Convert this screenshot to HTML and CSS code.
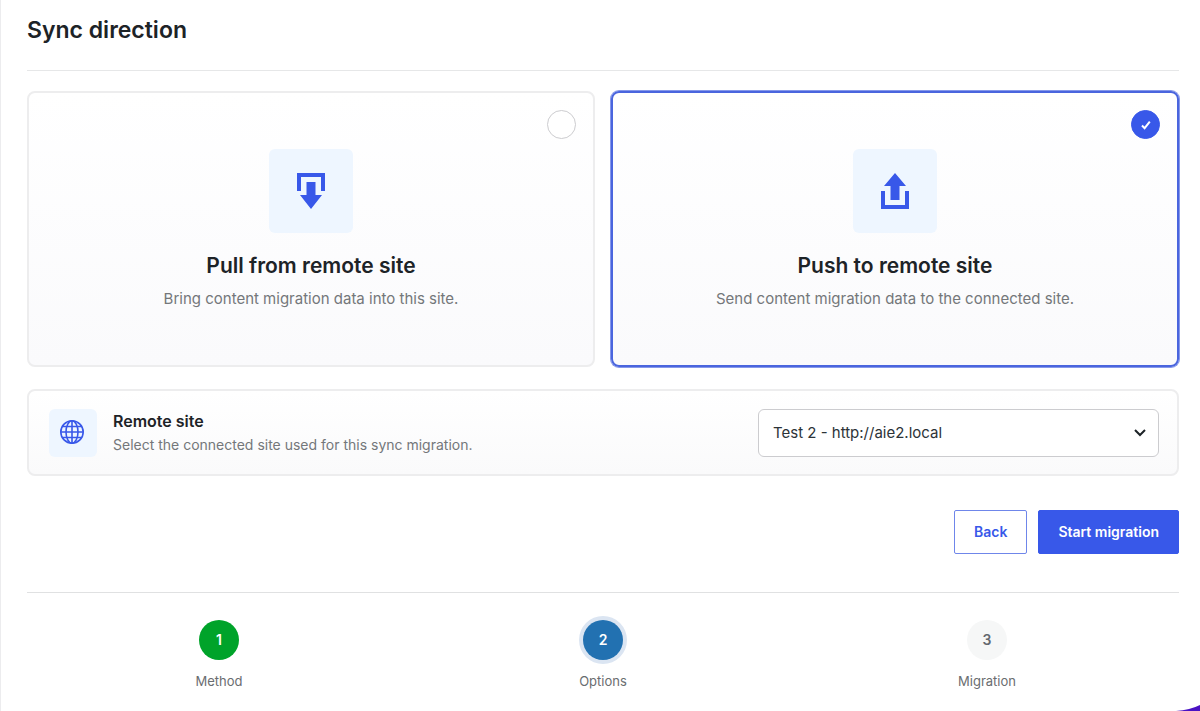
FILE: index.html
```html
<!DOCTYPE html>
<html lang="en">
<head>
<meta charset="utf-8">
<meta name="viewport" content="width=device-width, initial-scale=1">
<title>Sync direction</title>
<link rel="stylesheet" href="styles.css">
</head>
<body>
<main class="wizard">
  <header class="wizard-header">
    <h1 class="wizard-title">Sync direction</h1>
  </header>
  <form class="wizard-form">
    <div class="directions" role="radiogroup" aria-label="Sync direction">
      <label class="direction">
        <span class="direction-check">
          <input class="direction-radio" type="radio" name="direction" value="pull">
        </span>
        <span class="direction-icon">
          <svg width="28" height="36" viewBox="0 0 28 36" fill="currentColor" aria-hidden="true">
            <path d="M0 0H28V18H24V4H4V18H0Z"/>
            <path d="M9.5 9H18.5V22H25L14 36L3 22H9.5Z"/>
          </svg>
        </span>
        <span class="direction-name">Pull from remote site</span>
        <span class="direction-text">Bring content migration data into this site.</span>
      </label>
      <label class="direction direction-selected">
        <span class="direction-check">
          <input class="direction-radio" type="radio" name="direction" value="push" checked>
          <svg class="direction-tick" width="10" height="10" viewBox="0 0 10 10" fill="none" stroke="currentColor" stroke-width="2" aria-hidden="true">
            <path d="M1 5.5L3.6 8.2L8.8 1.6"/>
          </svg>
        </span>
        <span class="direction-icon">
          <svg width="28" height="36" viewBox="0 0 28 36" fill="currentColor" aria-hidden="true">
            <path d="M0 18H4V32H24V18H28V36H0Z"/>
            <path d="M14 0L25 13H18.5V27H9.5V13H3Z"/>
          </svg>
        </span>
        <span class="direction-name">Push to remote site</span>
        <span class="direction-text">Send content migration data to the connected site.</span>
      </label>
    </div>
    <section class="remote">
      <span class="remote-icon">
        <svg width="26" height="26" viewBox="0 0 26 26" fill="none" stroke="currentColor" stroke-width="1.6" aria-hidden="true">
          <circle cx="12" cy="12" r="11.2"/>
          <ellipse cx="12" cy="12" rx="6" ry="11.2"/>
          <path d="M12 1V23M1 12H23M2.4 6.5H21.6M2.4 17.5H21.6"/>
        </svg>
      </span>
      <div class="remote-copy">
        <label class="remote-name" for="remote-site">Remote site</label>
        <p class="remote-text">Select the connected site used for this sync migration.</p>
      </div>
      <div class="remote-field">
        <select class="remote-select" id="remote-site">
          <option>Test 2 - http://aie2.local</option>
        </select>
        <svg class="remote-arrow" width="12" height="8" viewBox="0 0 12 8" fill="none" stroke="currentColor" stroke-width="2" aria-hidden="true">
          <path d="M1 1L6 6L11 1"/>
        </svg>
      </div>
    </section>
    <div class="actions">
      <button class="button" type="button">Back</button>
      <button class="button button-primary" type="submit">Start migration</button>
    </div>
  </form>
  <ol class="steps">
    <li class="step"><span class="step-number step-done">1</span>Method</li>
    <li class="step"><span class="step-number step-current">2</span>Options</li>
    <li class="step"><span class="step-number">3</span>Migration</li>
  </ol>
</main>
<svg class="corner" width="24" height="6" viewBox="0 0 24 6" aria-hidden="true">
  <path d="M0 6Q14 5 24 0V6Z" fill="#4a12c4"/>
</svg>
</body>
</html>
```
FILE: styles.css
```css
* {
  box-sizing: border-box;
}

body {
  margin: 0;
  background: #fff;
  color: #1d2327;
  font-family: Inter, "Liberation Sans", sans-serif;
  font-size: 15px;
  line-height: 20px;
}

.wizard {
  min-height: 100vh;
  padding: 12px 21px 20px 26px;
  border-left: 1px solid #ececee;
}

.wizard-header {
  padding-bottom: 22px;
  border-bottom: 1px solid #e6e7e8;
}

.wizard-title {
  margin: 0;
  font-size: 23px;
  font-weight: 600;
  line-height: 36px;
}

.wizard-form {
  padding: 20px 0 38px;
}

.directions {
  display: grid;
  grid-template-columns: 1fr 1fr;
  gap: 16px;
}

.direction {
  position: relative;
  display: flex;
  flex-direction: column;
  align-items: center;
  padding: 56px 20px;
  border: 2px solid #ededee;
  border-radius: 8px;
  background: linear-gradient(#fff, #fafafc);
  text-align: center;
  cursor: pointer;
}

.direction-selected {
  border-color: #4a65de;
  box-shadow: 0 0 0 1px #8698ea;
}

.direction-check {
  position: absolute;
  top: 17px;
  right: 17px;
  display: grid;
  place-items: center;
}

.direction-radio,
.direction-tick {
  grid-area: 1 / 1;
}

.direction-radio {
  appearance: none;
  width: 29px;
  height: 29px;
  margin: 0;
  border: 1px solid #cccccf;
  border-radius: 50%;
  background: #fff;
}

.direction-radio:checked {
  border-color: #3858e9;
  background: #3858e9;
}

.direction-tick {
  z-index: 1;
  color: #fff;
}

.direction-icon {
  display: grid;
  place-items: center;
  width: 84px;
  height: 84px;
  border-radius: 6px;
  background: #eef6ff;
  color: #3858e9;
}

.direction-name {
  margin-top: 16px;
  font-size: 21px;
  font-weight: 600;
  line-height: 34px;
}

.direction-text {
  margin-top: 6px;
  color: #74777a;
}

.remote {
  display: flex;
  align-items: center;
  gap: 16px;
  margin-top: 22px;
  padding: 18px 18px 17px 20px;
  border: 2px solid #ededee;
  border-radius: 8px;
  background: linear-gradient(#fff, #fafafb);
}

.remote-icon {
  display: grid;
  place-items: center;
  width: 48px;
  height: 48px;
  border-radius: 6px;
  background: #eef6ff;
  color: #3858e9;
}

.remote-copy {
  flex: 1;
}

.remote-name {
  display: block;
  font-size: 16px;
  font-weight: 600;
  line-height: 24px;
}

.remote-text {
  margin: 0;
  color: #74777a;
  font-size: 14px;
  line-height: 24px;
}

.remote-field {
  display: grid;
  flex: 0 1 401px;
  align-items: center;
}

.remote-select,
.remote-arrow {
  grid-area: 1 / 1;
}

.remote-select {
  appearance: none;
  width: 100%;
  height: 48px;
  padding: 0 36px 0 14px;
  border: 1px solid #cccccf;
  border-radius: 6px;
  background: #fff;
  color: #2c3338;
  font: inherit;
}

.remote-arrow {
  justify-self: end;
  margin-right: 13px;
  pointer-events: none;
}

.actions {
  display: flex;
  justify-content: flex-end;
  gap: 11px;
  margin-top: 34px;
}

.button {
  height: 44px;
  padding: 0 19px;
  border: 1px solid #6f86ea;
  border-radius: 2px;
  background: #fff;
  color: #3858e9;
  font: inherit;
  font-size: 14px;
  font-weight: 600;
  cursor: pointer;
}

.button-primary {
  border-color: #3858e9;
  background: #3858e9;
  color: #fff;
}

.steps {
  display: grid;
  grid-template-columns: repeat(3, 1fr);
  margin: 0;
  padding: 27px 0 0;
  border-top: 1px solid #e0e1e2;
  list-style: none;
}

.step {
  display: flex;
  flex-direction: column;
  align-items: center;
  gap: 11px;
  color: #6a6d70;
  font-size: 13px;
}

.step-number {
  display: grid;
  place-items: center;
  width: 40px;
  height: 40px;
  border-radius: 50%;
  background: #f6f7f7;
  color: #646970;
  font-size: 14px;
  font-weight: 600;
}

.step-done {
  background: #00a32a;
  color: #fff;
}

.step-current {
  background: #2271b1;
  box-shadow: 0 0 0 4px #dbe5f2;
  color: #fff;
}

.corner {
  position: fixed;
  right: 0;
  bottom: 0;
}
```
